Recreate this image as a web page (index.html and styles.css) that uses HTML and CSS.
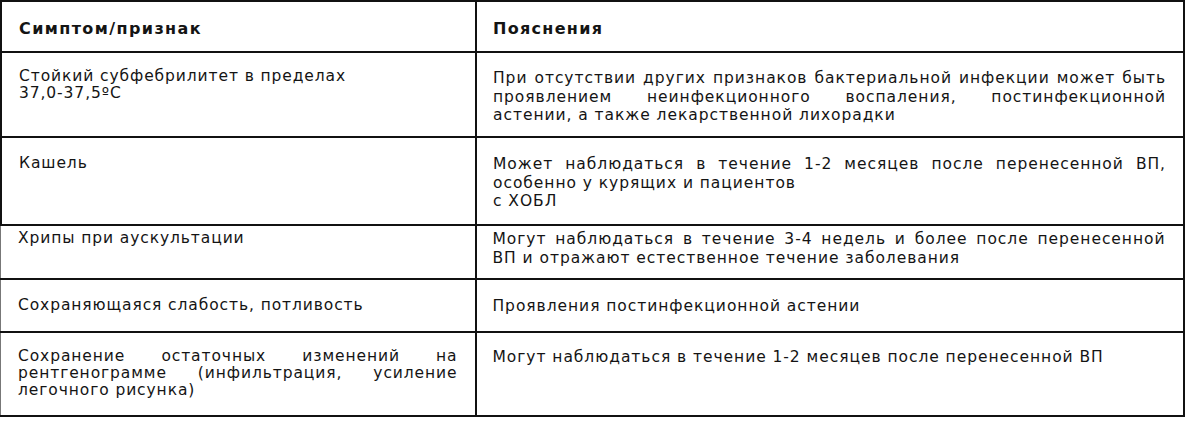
FILE: index.html
```html
<!DOCTYPE html>
<html lang="ru">
<head>
<meta charset="utf-8">
<title>Симптомы</title>
<link rel="stylesheet" href="styles.css">
</head>
<body>
<div class="page">
  <table class="tbl top">
    <colgroup><col class="c1"><col class="c2"></colgroup>
    <tr class="rh">
      <th class="left">Симптом/признак</th>
      <th class="right">Пояснения</th>
    </tr>
    <tr class="r1">
      <td class="left"><span class="l">Стойкий субфебрилитет в пределах</span><span class="l">37,0-37,5ºC</span></td>
      <td class="right"><span class="l j">При отсутствии других признаков бактериальной инфекции может быть</span><span class="l j">проявлением неинфекционного воспаления, постинфекционной</span><span class="l">астении, а также лекарственной лихорадки</span></td>
    </tr>
    <tr class="r2">
      <td class="left"><span class="l">Кашель</span></td>
      <td class="right"><span class="l j">Может наблюдаться в течение 1-2 месяцев после перенесенной ВП,</span><span class="l">особенно у курящих и пациентов</span><span class="l">с ХОБЛ</span></td>
    </tr>
  </table>
  <table class="tbl bottom">
    <colgroup><col class="c1"><col class="c2"></colgroup>
    <tr class="r3">
      <td class="left"><span class="l">Хрипы при аускультации</span></td>
      <td class="right"><span class="l j">Могут наблюдаться в течение 3-4 недель и более после перенесенной</span><span class="l">ВП и отражают естественное течение заболевания</span></td>
    </tr>
    <tr class="r4">
      <td class="left"><span class="l">Сохраняющаяся слабость, потливость</span></td>
      <td class="right"><span class="l">Проявления постинфекционной астении</span></td>
    </tr>
    <tr class="r5">
      <td class="left"><span class="l j">Сохранение остаточных изменений на</span><span class="l j">рентгенограмме (инфильтрация, усиление</span><span class="l">легочного рисунка)</span></td>
      <td class="right"><span class="l">Могут наблюдаться в течение 1-2 месяцев после перенесенной ВП</span></td>
    </tr>
  </table>
</div>
</body>
</html>
```
FILE: styles.css
```css
html, body {
  margin: 0;
  padding: 0;
  background: #ffffff;
}

.page {
  width: 1183px;
}

.tbl {
  border-collapse: collapse;
  table-layout: fixed;
  width: 1183px;
  color: #141414;
}

.c1 { width: 475px; }
.c2 { width: 708px; }

.tbl th, .tbl td {
  border: 2px solid #111;
  vertical-align: top;
  box-sizing: border-box;
  text-align: left;
  font-weight: normal;
}

.bottom tr:first-child td { border-top: none; }
.bottom td.left { border-left: 1px solid #777; }

.left {
  font-family: "DejaVu Sans", Verdana, sans-serif;
  font-size: 15.5px;
  letter-spacing: 0.9px;
  line-height: 17px;
  padding: 0 17px 0 17px;
}

.right {
  font-family: "DejaVu Sans", Tahoma, sans-serif;
  font-size: 15.5px;
  letter-spacing: 0.95px;
  line-height: 18.5px;
  padding: 0 17px 0 16px;
}

.tbl th.left,
.tbl th.right {
  font-family: "DejaVu Sans", Verdana, sans-serif;
  font-weight: bold;
  font-size: 16px;
  letter-spacing: 1.4px;
  line-height: 17px;
}

.tbl th.right { letter-spacing: 1.3px; }

.l { display: block; text-align: left; }
.j { text-align: justify; text-align-last: justify; }

.rh { height: 51px; }
.rh th { padding-top: 18px; }

.r1 { height: 85px; }
.r1 td { padding-top: 15px; }
.r1 td.right { padding-top: 16px; }

.r2 { height: 88px; }
.r2 td { padding-top: 17px; }

.r3 { height: 53px; }
.r3 td { padding-top: 4px; }

.r4 { height: 53px; }
.r4 td { padding-top: 17px; }

.r5 { height: 84px; }
.r5 td { padding-top: 15px; }
```
